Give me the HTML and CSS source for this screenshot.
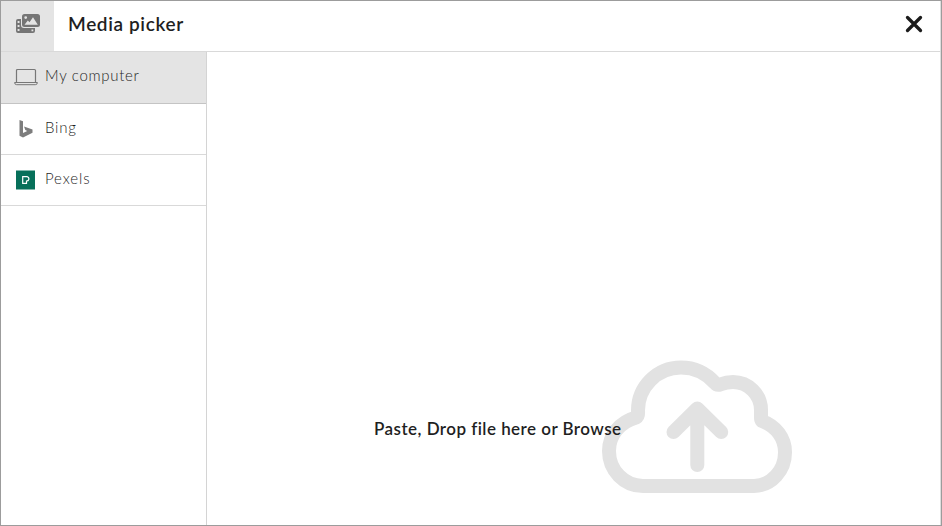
FILE: index.html
```html
<!DOCTYPE html>
<html lang="en">
<head>
<meta charset="utf-8">
<title>Media picker</title>
<link rel="stylesheet" href="styles.css">
</head>
<body>
<div class="dialog">
  <header class="header">
    <div class="badge">
      <svg width="26" height="22" viewBox="0 0 26 22">
        <path fill="#757575" fill-rule="evenodd" d="M9.500 1H22.500Q25 1 25 3.500V11.500Q25 14 22.500 14H9.500Q7 14 7 11.500V3.500Q7 1 9.500 1ZM9.500 11.800H22.800L18 4.300L14.500 9.300L12.800 7.500ZM10.700 3.200A1.400 1.400 0 1 0 10.700 6A1.400 1.400 0 1 0 10.700 3.200Z"/>
        <path fill="#757575" fill-rule="evenodd" d="M3 6H6V12Q6 15 9 15H20V18Q20 20 18 20H3Q1 20 1 18V8Q1 6 3 6ZM2.600 8V10H4.500V8ZM2.600 12V14H4.500V12ZM2.600 16V18H4.500V16ZM16.500 16.500V18.200H18.300V16.500Z"/>
      </svg>
    </div>
    <h1 class="title">Media picker</h1>
    <button class="close" aria-label="Close">
      <svg width="18" height="18" viewBox="0 0 18 18"><path d="M2.500 2.500L15.500 15.500M15.500 2.500L2.500 15.500" fill="none" stroke="#1c1c1c" stroke-width="3.300" stroke-linecap="round"/></svg>
    </button>
  </header>
  <div class="main">
    <nav class="sources">
      <a class="source selected">
        <svg class="icon" width="24" height="18" viewBox="0 0 24 18" fill="none" stroke="#777"><path d="M2.500 14V2.500Q2.500 1.500 3.500 1.500H20.500Q21.500 1.500 21.500 2.500V14" stroke-width="1.200"/><path d="M.600 14.500H23.400Q23.400 16.700 21.300 16.700H2.700Q.600 16.700 .600 14.500Z"/></svg>
        <span class="name computer">My computer</span>
      </a>
      <a class="source">
        <svg class="icon" width="24" height="20" viewBox="0 0 24 20"><path fill="#7d7d7d" d="M5.500 1L9 2.300V14L13.200 12L11.300 11.100L10 7.600L18.500 10.500V13.800L9 18.500L5.500 16.700Z"/></svg>
        <span class="name bing">Bing</span>
      </a>
      <a class="source">
        <svg class="icon" width="24" height="20" viewBox="0 0 24 20"><path fill="#07705a" d="M2 .500H21V19.500H2Z"/><path d="M8.700 6.700H13A2.200 2.200 0 0 1 14.800 9.500Q14.400 11 12.500 11V13.400H8.700Z" fill="none" stroke="#fff" stroke-width="1.200"/></svg>
        <span class="name pexels">Pexels</span>
      </a>
    </nav>
    <section class="dropzone">
      <p class="prompt">Paste, Drop file here or Browse</p>
      <svg class="cloud" width="192" height="136" viewBox="601 359 192 136" fill="none" stroke="#e2e2e2" stroke-width="14" stroke-linecap="round" stroke-linejoin="round">
        <path d="M643 486H754A31.500 33.500 0 0 0 785 452C785 438 776 426 762 421Q761 420 761 418V410A28 28 0 0 0 733 382C728 382 724 383 720 384.500Q717 385.500 715 383C706 373 696 367.500 681 367.500A43 43 0 0 0 638 411Q638.500 416 636 417.500C620 422 609 435 609 451A34 35 0 0 0 643 486Z"/>
        <path d="M697.300 409V465M673.500 432L697.300 408.500L721.200 432"/>
      </svg>
    </section>
  </div>
</div>
</body>
</html>
```
FILE: styles.css
```css
* { box-sizing: border-box; }
body { margin: 0; font-family: Lato, sans-serif; color: #1f1f1f; background: #fff; }
.dialog { width: 942px; height: 526px; border: 1px solid #9c9c9c; display: flex; flex-direction: column; overflow: hidden; }
.header { height: 51px; display: flex; align-items: center; border-bottom: 1px solid #d9d9d9; border-right: 1px solid #dedede; }
.badge { width: 53px; height: 50px; background: #e4e4e4; display: flex; align-items: center; justify-content: center; padding-bottom: 4px; }
.title { margin: 0 auto 4px 14px; font-size: 19px; line-height: 24px; font-weight: 600; letter-spacing: .62px; white-space: nowrap; }
.close { border: 0; background: none; padding: 0; margin: 0 17px 4px 0; height: 18px; }
.close svg { display: block; }
.main { flex: 1; display: flex; min-height: 0; border-right: 1px solid #dedede; }
.sources { width: 206px; border-right: 1px solid #d4d4d4; }
.source { height: 51px; display: flex; align-items: center; border-bottom: 1px solid #d9d9d9; padding-left: 13px; font-size: 15px; font-weight: 300; }
.selected { height: 52px; background: #e4e4e4; border-color: #c4c4c4; padding-bottom: 1px; }
.icon { flex: none; }
.name { margin: 0 0 5px 7px; line-height: 20px; white-space: nowrap; }
.computer { letter-spacing: .7px; }
.bing { letter-spacing: .75px; }
.pexels { letter-spacing: .9px; }
.dropzone { flex: 1; display: flex; align-items: flex-end; padding: 0 0 30px 167px; }
.prompt { margin: 0 -21px 54px 0; width: 248px; flex: none; position: relative; z-index: 1; font-size: 17px; line-height: 24px; font-weight: 600; white-space: nowrap; letter-spacing: .46px; }
.cloud { flex: none; }
```
